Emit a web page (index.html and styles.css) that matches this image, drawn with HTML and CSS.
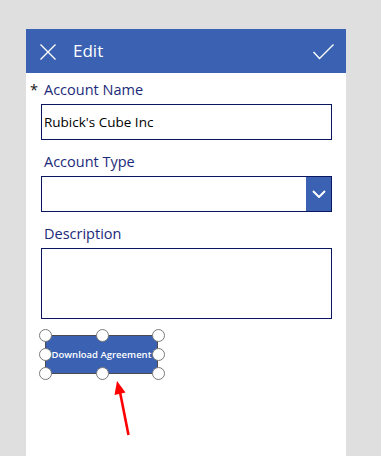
FILE: index.html
```html
<!DOCTYPE html>
<html>
<head>
<meta charset="utf-8">
<link rel="stylesheet" href="styles.css">
</head>
<body>
<div class="card">
  <div class="header">
    <svg class="icon-x" width="16" height="16" viewBox="0 0 16 16"><path d="M0.5 0.5 L15.5 15.5 M15.5 0.5 L0.5 15.5" stroke="#fff" stroke-width="1.4" fill="none"/></svg>
    <span class="title">Edit</span>
    <svg class="icon-check" width="21" height="16" viewBox="0 0 21 16"><path d="M0.5 8 L6.5 14.5 L20.5 0.5" stroke="#fff" stroke-width="1.4" fill="none"/></svg>
  </div>
  <div class="form">
    <div class="field">
      <div class="label"><span class="req">*</span>Account Name</div>
      <div class="input">Rubick's Cube Inc</div>
    </div>
    <div class="field">
      <div class="label">Account Type</div>
      <div class="select">
        <div class="select-value"></div>
        <div class="select-btn">
          <svg width="14" height="8" viewBox="0 0 14 8"><path d="M1 1 L7 7 L13 1" stroke="#fff" stroke-width="2" fill="none"/></svg>
        </div>
      </div>
    </div>
    <div class="field">
      <div class="label">Description</div>
      <div class="textarea"></div>
    </div>
    <div class="btn-wrap">
      <div class="btn">Download Agreement</div>
      <span class="h h-tl"></span><span class="h h-tc"></span><span class="h h-tr"></span>
      <span class="h h-ml"></span><span class="h h-mr"></span>
      <span class="h h-bl"></span><span class="h h-bc"></span><span class="h h-br"></span>
    </div>
  </div>
  <svg class="arrow" width="30" height="60" viewBox="0 0 30 60"><path d="M16.5 55 L8 12" stroke="#f00" stroke-width="2.6" fill="none"/><path d="M5 1 L2.5 15 L13.5 12.5 Z" fill="#f00"/></svg>
</div>
</body>
</html>
```
FILE: styles.css
```css
html, body {
  margin: 0;
  padding: 0;
  background: #dfdfdf;
  font-family: "Open Sans", "Noto Sans", sans-serif;
}
body {
  padding-top: 29px;
}
.card {
  position: relative;
  margin-left: 26px;
  width: 320px;
  min-height: calc(100vh - 29px);
  background: #fff;
}
.header {
  height: 44px;
  background: #3a61b2;
  display: flex;
  align-items: center;
  padding: 0 12px 0 14px;
  color: #fff;
}
.icon-x {
  display: block;
  margin-top: 2px;
}
.title {
  font-size: 17px;
  margin-left: 17px;
  flex: 1;
  line-height: 20px;
}
.icon-check {
  display: block;
  margin-top: 1px;
}
.form {
  padding: 7px 14px 0 15px;
  display: flex;
  flex-direction: column;
  gap: 12px;
}
.label {
  position: relative;
  font-size: 14.5px;
  line-height: 20px;
  color: #1b2a7a;
  padding-left: 3px;
  margin-bottom: 4px;
}
.req {
  position: absolute;
  left: -11px;
  top: 0;
  color: #111;
}
.input {
  height: 34px;
  border: 1px solid #0a1660;
  font-size: 13.5px;
  line-height: 34px;
  padding-left: 2px;
  color: #000;
}
.select {
  height: 34px;
  border: 1px solid #0a1660;
  display: flex;
}
.select-value { flex: 1; }
.select-btn {
  width: 25px;
  background: #3a61b2;
  display: flex;
  align-items: center;
  justify-content: center;
}
.select-btn svg { display: block; }
.textarea {
  height: 69px;
  border: 1px solid #0a1660;
}
.btn-wrap {
  position: relative;
  width: 113px;
  margin: 4px 0 0 4px;
}
.btn {
  height: 37px;
  border: 1px solid #4a4a52;
  background: #3a61b2;
  color: #fff;
  font-size: 9.5px;
  font-weight: 600;
  display: flex;
  align-items: center;
  justify-content: center;
  white-space: nowrap;
}
.h {
  position: absolute;
  width: 11px;
  height: 11px;
  border: 1px solid #7a7a7a;
  border-radius: 50%;
  background: #fff;
}
.h-tl { left: -6px; top: -6px; }
.h-tc { left: 51px; top: -6px; }
.h-tr { left: 107px; top: -6px; }
.h-ml { left: -6px; top: 13px; }
.h-mr { left: 107px; top: 13px; }
.h-bl { left: -6px; top: 32px; }
.h-bc { left: 51px; top: 32px; }
.h-br { left: 107px; top: 32px; }
.arrow {
  position: absolute;
  left: 86px;
  top: 351px;
}
```
